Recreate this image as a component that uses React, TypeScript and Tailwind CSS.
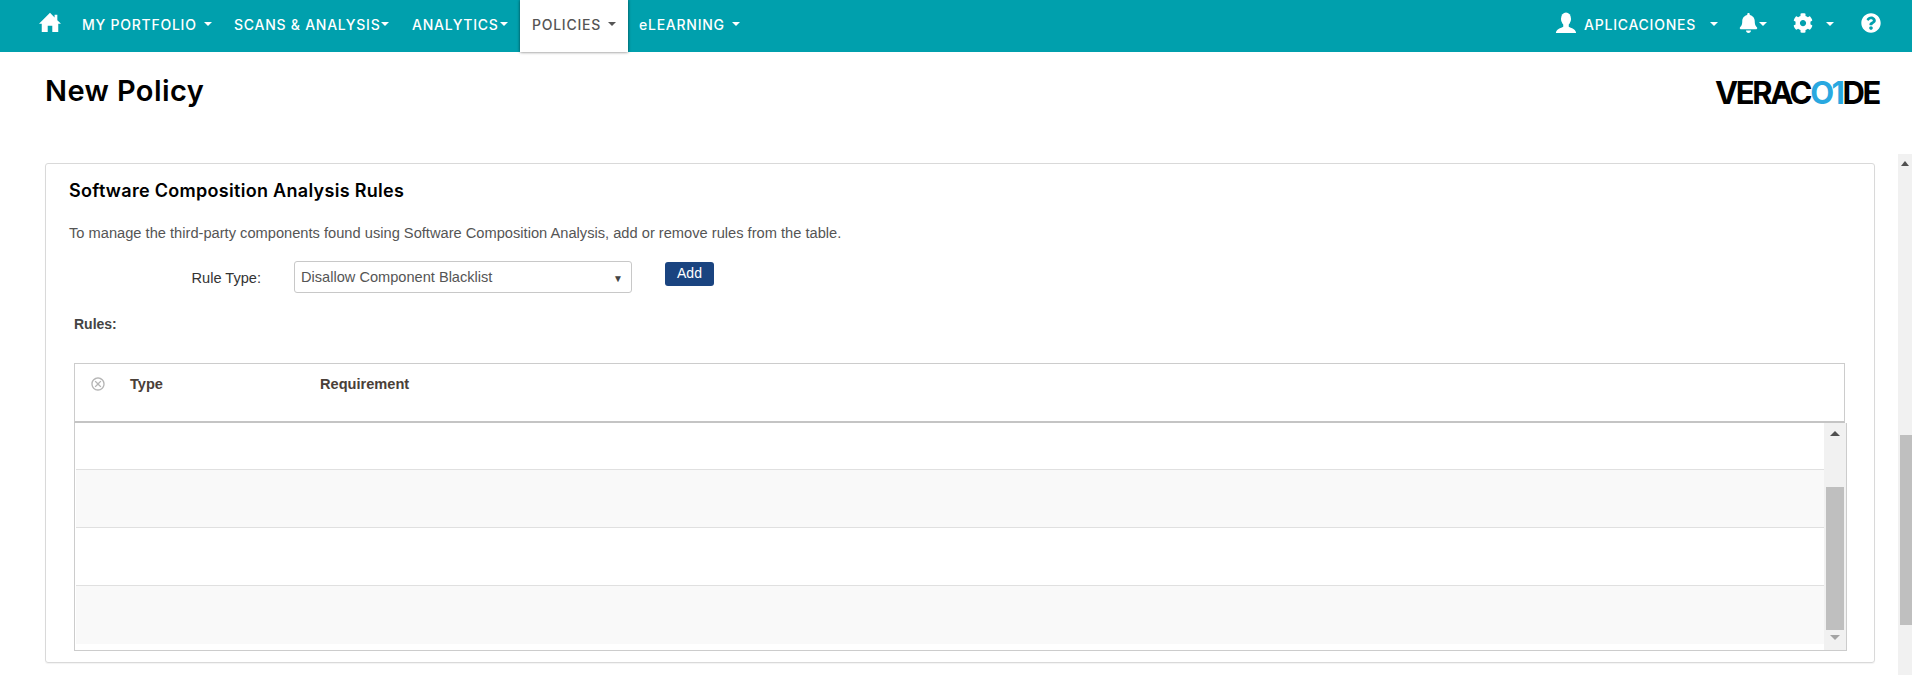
import React from 'react';
import { FaBell, FaCog, FaQuestionCircle } from 'react-icons/fa';
import { MdOutlineCancel } from 'react-icons/md';

function Caret({ className = '' }: { className?: string }) {
  return <span className={`inline-block w-0 h-0 border-x-[4px] border-x-transparent border-t-[4px] border-t-current ${className}`} />;
}

function HomeIcon() {
  return (
    <svg viewBox="0 0 24 24" className="w-[22px] h-[22px]" fill="currentColor">
      <path d="M12 2 L17 7 V4 H20 V10 L24 14 H21 V23 H14.5 V16 H9.5 V23 H3 V14 H0 Z" />
    </svg>
  );
}

function UserIcon() {
  return (
    <svg viewBox="0 0 24 24" className="w-[22px] h-[22px] mb-[3px]" fill="currentColor">
      <ellipse cx="12" cy="7.5" rx="5.5" ry="7" />
      <path d="M1 23 C1 19 5 18 9 16 V13 H15 V16 C19 18 23 19 23 23 Z" />
    </svg>
  );
}

const navFont = { fontFamily: 'Inter, "Noto Sans", sans-serif' };

export default function App() {
  return (
    <div className="w-[1912px] h-[675px] overflow-hidden bg-white flex flex-col" style={{ fontFamily: '"Liberation Sans", Arial, sans-serif' }}>
      {/* Top nav */}
      <div className="h-[52px] shrink-0 bg-[#00a0ad] text-white flex items-stretch text-[14px] tracking-[0.75px] font-medium" style={navFont}>
        <div className="w-[82px] shrink-0 flex items-start pl-[39px] pt-[11px]">
          <HomeIcon />
        </div>
        <div className="w-[152px] shrink-0 flex items-center gap-[7px] pb-[4px]">
          MY PORTFOLIO <Caret />
        </div>
        <div className="w-[178px] shrink-0 flex items-center gap-[1px] pb-[4px]">
          SCANS &amp; ANALYSIS<Caret />
        </div>
        <div className="w-[108px] shrink-0 flex items-center gap-[1px] pb-[4px]">
          ANALYTICS<Caret />
        </div>
        <div className="w-[108px] shrink-0 bg-white text-[#555555] flex items-center justify-center gap-[7px] pb-[4px] shadow-[0_0_3px_rgba(0,0,0,0.6)]">
          POLICIES <Caret />
        </div>
        <div className="ml-[11px] flex items-center gap-[7px] pb-[4px]">
          eLEARNING <Caret />
        </div>
        <div className="ml-auto flex items-center pb-[4px]">
          <UserIcon />
          <span className="ml-[7px]">APLICACIONES</span>
          <Caret className="ml-[14px]" />
          <FaBell className="w-[19px] h-[20px] ml-[21px] mb-[3px]" />
          <Caret className="ml-[1px]" />
          <FaCog className="w-[20px] h-[20px] ml-[26px] mb-[3px]" />
          <Caret className="ml-[13px]" />
          <FaQuestionCircle className="w-[20px] h-[20px] ml-[27px] mr-[31px] mb-[3px]" />
        </div>
      </div>

      {/* Page heading */}
      <div className="h-[102px] shrink-0 flex items-start justify-between pl-[45px] pr-[33px]">
        <h1 className="mt-[21px] text-[29px] tracking-[0.4px] leading-[36px] font-semibold text-black" style={navFont}>New Policy</h1>
        <div className="mt-[24px] text-[31px] leading-[34px] font-bold tracking-[-2.4px] text-black" style={navFont}>
          VERAC<span className="text-[#29a8e0]">O1</span>DE
        </div>
      </div>

      {/* Scroll area */}
      <div className="flex-1 min-h-0 flex">
        <div className="flex-1 min-w-0 pt-[9px] pl-[45px] pr-[23px]">
          <div className="h-[500px] border border-[#d9d9d9] rounded-[3px] pl-[23px] pr-[28px] shadow-[0_1px_1px_rgba(0,0,0,0.05)]">
            <h2 className="mt-[16px] text-[18px] tracking-[0.3px] leading-[22px] font-semibold text-black" style={navFont}>Software Composition Analysis Rules</h2>
            <p className="mt-[21px] text-[14.67px] leading-[20px] text-[#555555]">
              To manage the third-party components found using Software Composition Analysis, add or remove rules from the table.
            </p>

            <div className="mt-[18px] flex items-start">
              <label className="w-[192px] text-right pt-[7px] text-[14.6px] leading-[20px] text-[#333333]">Rule Type:</label>
              <div className="ml-[33px] w-[338px] h-[32px] border border-[#c8c8c8] rounded-[3px] flex items-center justify-between pl-[6px] pr-[8px] pt-[2px] text-[14.6px] text-[#555555]">
                Disallow Component Blacklist
                <span className="text-[10px] text-[#444444]">▼</span>
              </div>
              <button className="ml-[33px] mt-[1px] w-[49px] h-[24px] bg-[#1a4480] rounded-[3px] text-white text-[14px] leading-[20px] pb-[2px]">Add</button>
            </div>

            <div className="mt-[21px] ml-[5px] text-[14px] leading-[20px] font-semibold text-[#444444]">Rules:</div>

            {/* Rules table */}
            <div className="mt-[29px] ml-[5px] w-[1771px] h-[60px] border border-[#cccccc] border-b-2 border-b-[#c4c4c4] flex items-start pt-[10px] text-[14.6px] leading-[20px] font-bold text-[#4a4038]">
              <MdOutlineCancel className="ml-[15px] mt-[2px] w-[16px] h-[16px] text-[#b5b5b5]" />
              <span className="ml-[24px] w-[190px]">Type</span>
              <span>Requirement</span>
            </div>
            <div className="ml-[5px] w-[1773px] h-[228px] border-l border-r border-b border-[#cccccc] flex">
              <div className="flex-1 min-w-0 pl-[1px] flex flex-col">
                <div className="h-[47px] shrink-0 border-b border-[#e0e0e0]" />
                <div className="h-[58px] shrink-0 border-b border-[#e0e0e0] bg-[#f9f9f9]" />
                <div className="h-[58px] shrink-0 border-b border-[#e0e0e0]" />
                <div className="h-[58px] shrink-0 bg-[#f9f9f9]" />
              </div>
              <Scrollbar />
            </div>
          </div>
        </div>

        {/* Page scrollbar */}
        <div className="w-[14px] shrink-0 bg-[#f1f1f1] pl-[2px] relative">
          <div className="absolute top-[7px] left-[3px] w-0 h-0 border-x-[4px] border-x-transparent border-b-[5px] border-b-[#505050]" />
          <div className="mt-[281px] h-[190px] bg-[#bfbfbf]" />
        </div>
      </div>
    </div>
  );
}

function Scrollbar() {
  return (
    <div className="w-[22px] shrink-0 bg-[#f1f1f1] flex flex-col">
      <div className="mt-[8px] self-center w-0 h-0 border-x-[5px] border-x-transparent border-b-[5px] border-b-[#505050] -mb-[13px]" />
      <div className="h-[143px] mt-[64px] mx-[2px] bg-[#bfbfbf]" />
      <div className="mt-[5px] self-center w-0 h-0 border-x-[5px] border-x-transparent border-t-[5px] border-t-[#a3a3a3]" />
    </div>
  );
}
